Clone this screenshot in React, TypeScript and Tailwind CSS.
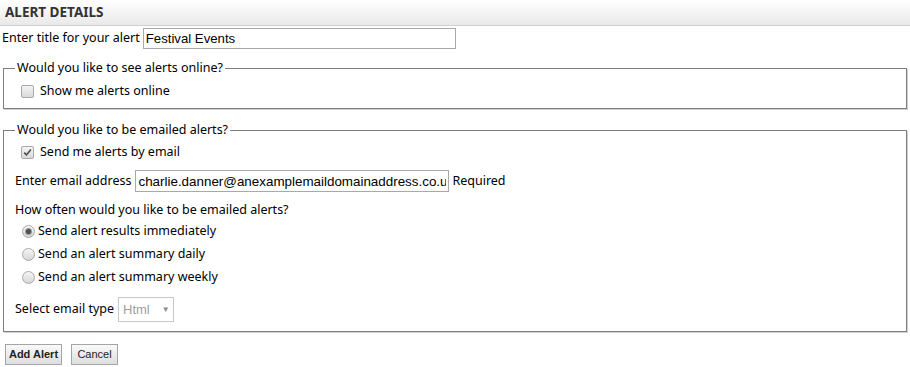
import React from "react";

const sans = "font-['Noto_Sans',sans-serif]";
const arial = "font-['Liberation_Sans',Arial,sans-serif]";

function Checkbox({ checked }: { checked?: boolean }) {
  return (
    <span className="relative inline-flex h-[13px] w-[13px] shrink-0 items-center justify-center rounded-[2px] border border-[#a9a9a9] bg-gradient-to-b from-[#f4f4f4] to-[#d9d9d9]">
      {checked && (
        <svg width="9" height="9" viewBox="0 0 9 9">
          <path d="M1.2 4.6 L3.5 6.9 L7.9 1.6" fill="none" stroke="#4a4a4a" strokeWidth="1.6" />
        </svg>
      )}
    </span>
  );
}

function Radio({ checked }: { checked?: boolean }) {
  return (
    <span className="inline-flex h-[13px] w-[13px] shrink-0 items-center justify-center rounded-full border border-[#a9a9a9] bg-gradient-to-b from-[#f6f6f6] to-[#d6d6d6]">
      {checked && <span className="h-[5px] w-[5px] rounded-full bg-[#505050] shadow-[0_0_0_1px_#9a9a9a]" />}
    </span>
  );
}

export default function App() {
  return (
    <div className={`h-[367px] w-[910px] overflow-hidden bg-white text-[12.5px] text-black ${sans}`}>
      <div className="flex h-[26px] items-center border-b border-[#cfcfcf] bg-gradient-to-b from-white to-[#e9e9e9] pl-[5px] text-[13.5px] font-bold text-[#333]">
        ALERT DETAILS
      </div>

      <div className="mt-[2px] flex h-[21px] items-center pl-[2px]">
        <span>Enter title for your alert</span>
        <input
          readOnly
          value="Festival Events"
          className={`ml-[3px] h-[21px] w-[313px] border border-[#a9a9a9] px-[2px] text-[13.2px] outline-none ${arial}`}
        />
      </div>

      <fieldset className="mx-[3px] mt-[11px] border border-[#7f7f7f] pb-[7px] pl-[11px] shadow-[1px_1px_0_#cfcfcf]">
        <legend className="px-[2px] leading-[16px]">Would you like to see alerts online?</legend>
        <div className="mt-[5px] flex h-[20px] items-center pl-[6px]">
          <Checkbox />
          <span className="ml-[6px]">Show me alerts online</span>
        </div>
      </fieldset>

      <fieldset className="mx-[3px] mt-[13px] border border-[#7f7f7f] pb-[9px] pl-[11px] shadow-[1px_1px_0_#cfcfcf]">
        <legend className="px-[2px] leading-[16px]">Would you like to be emailed alerts?</legend>
        <div className="mt-[4px] flex h-[20px] items-center pl-[6px]">
          <Checkbox checked />
          <span className="ml-[6px]">Send me alerts by email</span>
        </div>
        <div className="mt-[8px] flex h-[22px] items-center">
          <span>Enter email address</span>
          <input
            readOnly
            value="charlie.danner@anexamplemaildomainaddress.co.uk"
            className={`ml-[4px] h-[22px] w-[314px] border border-[#a9a9a9] px-[2px] text-[13.4px] outline-none ${arial}`}
          />
          <span className="ml-[3px]">Required</span>
        </div>
        <div className="mt-[9px] flex h-[18px] items-center">How often would you like to be emailed alerts?</div>
        <div className="mt-[1px] flex h-[23px] items-center pl-[7px]">
          <Radio checked />
          <span className="ml-[3px]">Send alert results immediately</span>
        </div>
        <div className="flex h-[23px] items-center pl-[7px]">
          <Radio />
          <span className="ml-[3px]">Send an alert summary daily</span>
        </div>
        <div className="flex h-[23px] items-center pl-[7px]">
          <Radio />
          <span className="ml-[3px]">Send an alert summary weekly</span>
        </div>
        <div className="mt-[8px] flex h-[25px] items-center">
          <span>Select email type</span>
          <div className={`ml-[4px] flex h-[25px] w-[56px] items-center border border-[#c8c8c8] pl-[4px] text-[13px] text-[#a0a0a0] ${arial}`}>
            <span>Html</span>
            <span className="ml-[12px] text-[8px] text-[#8a8a8a]">▼</span>
          </div>
        </div>
      </fieldset>

      <div className={`mt-[12px] flex gap-[9px] pl-[5px] text-[11px] ${arial}`}>
        <button className="h-[21px] w-[57px] border border-[#a5a5a5] bg-gradient-to-b from-[#fafafa] to-[#dedede] font-bold text-[#222]">
          Add Alert
        </button>
        <button className="h-[21px] w-[47px] border border-[#a5a5a5] bg-gradient-to-b from-[#fafafa] to-[#dedede] text-[#222]">
          Cancel
        </button>
      </div>
    </div>
  );
}
